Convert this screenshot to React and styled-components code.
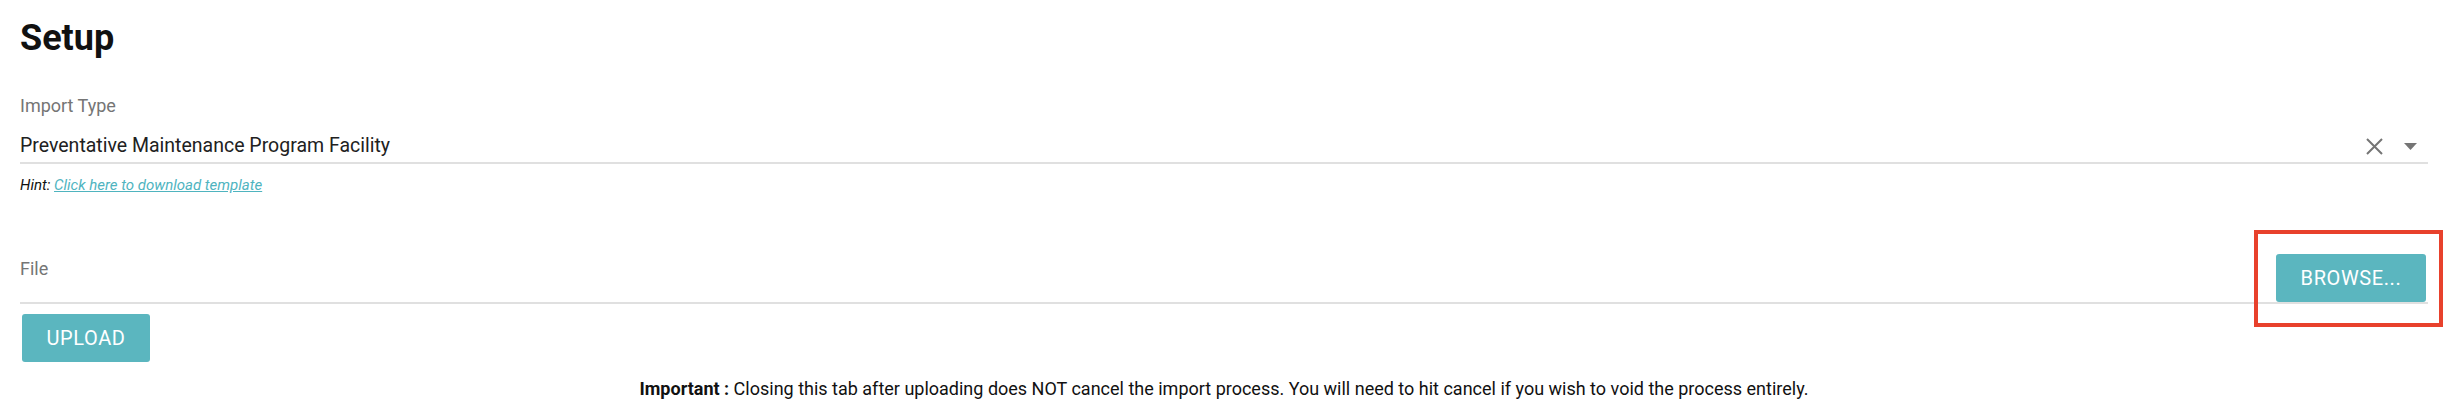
import React from "react";
import styled, { createGlobalStyle } from "styled-components";

const GlobalStyle = createGlobalStyle`
    html, body {
        margin: 0;
        padding: 0;
        background: #ffffff;
        font-family: Roboto, "Liberation Sans", Arial, sans-serif;
        color: #212121;
    }
`;

const Page = styled.div`
    width: 2448px;
    height: 408px;
    box-sizing: border-box;
    padding: 18px 20px 0 20px;
    overflow: hidden;
`;

const Title = styled.h1`
    margin: 0;
    font-size: 36px;
    line-height: 40px;
    font-weight: 700;
    color: #111111;
`;

const Field = styled.div`
    margin-top: 36px;
`;

const Label = styled.div`
    font-size: 18px;
    line-height: 24px;
    color: #757575;
`;

const SelectRow = styled.div`
    display: flex;
    align-items: center;
    margin-top: 14px;
    height: 30px;
    border-bottom: 2px solid #e0e0e0;
`;

const Value = styled.div`
    flex: 1;
    font-size: 19.5px;
    line-height: 28px;
    color: #212121;
    align-self: flex-start;
`;

const Icons = styled.div`
    display: flex;
    align-items: center;
    gap: 21px;
    margin-right: 11px;
    margin-top: -2px;
`;

const Hint = styled.div`
    margin-top: 11px;
    font-size: 15px;
    line-height: 20px;
    font-style: italic;
    color: #111111;
`;

const Link = styled.a`
    color: #4fb4bf;
    text-decoration: underline;
    cursor: pointer;
`;

const FileRow = styled.div`
    display: flex;
    justify-content: space-between;
    align-items: flex-start;
    margin-top: 59px;
    border-bottom: 2px solid #e0e0e0;
`;

const FileLabel = styled(Label)`
    margin-top: 3px;
`;

const Highlight = styled.div`
    position: relative;
    margin-right: 2px;

    &::after {
        content: "";
        position: absolute;
        left: -22px;
        right: -17px;
        top: -24px;
        bottom: -25px;
        border: 4px solid #e8412c;
        pointer-events: none;
    }
`;

const Button = styled.button`
    display: block;
    width: ${(p) => p.$width}px;
    height: 48px;
    border: none;
    border-radius: 3px;
    background: #5bb6bf;
    color: #ffffff;
    font-family: Roboto, "Liberation Sans", Arial, sans-serif;
    font-size: 20px;
    font-weight: 400;
    letter-spacing: 0.6px;
    text-transform: uppercase;
    cursor: pointer;
    padding: 0;
`;

const UploadWrap = styled.div`
    margin-top: 10px;
    padding-left: 2px;
`;

const Notice = styled.div`
    margin-top: 15px;
    text-align: center;
    font-size: 18px;
    line-height: 24px;
    color: #111111;

    b {
        font-weight: 700;
    }
`;

const ClearIcon = () => (
    <svg width="17" height="17" viewBox="0 0 17 17">
        <path d="M1 1 L16 16 M16 1 L1 16" stroke="#757575" strokeWidth="2" fill="none" />
    </svg>
);

const Caret = () => (
    <svg width="13" height="7" viewBox="0 0 13 7">
        <path d="M0 0 L13 0 L6.5 7 Z" fill="#757575" />
    </svg>
);

const App = () => {
    return (
        <>
            <GlobalStyle />
            <Page>
                <Title>Setup</Title>
                <Field>
                    <Label>Import Type</Label>
                    <SelectRow>
                        <Value>Preventative Maintenance Program Facility</Value>
                        <Icons>
                            <ClearIcon />
                            <Caret />
                        </Icons>
                    </SelectRow>
                    <Hint>
                        Hint: <Link>Click here to download template</Link>
                    </Hint>
                </Field>
                <FileRow>
                    <FileLabel>File</FileLabel>
                    <Highlight>
                        <Button $width={150}>Browse...</Button>
                    </Highlight>
                </FileRow>
                <UploadWrap>
                    <Button $width={128}>Upload</Button>
                </UploadWrap>
                <Notice>
                    <b>Important :</b> Closing this tab after uploading does NOT cancel the import process. You will need to hit cancel if you wish to void the process entirely.
                </Notice>
            </Page>
        </>
    );
};

export default App;
